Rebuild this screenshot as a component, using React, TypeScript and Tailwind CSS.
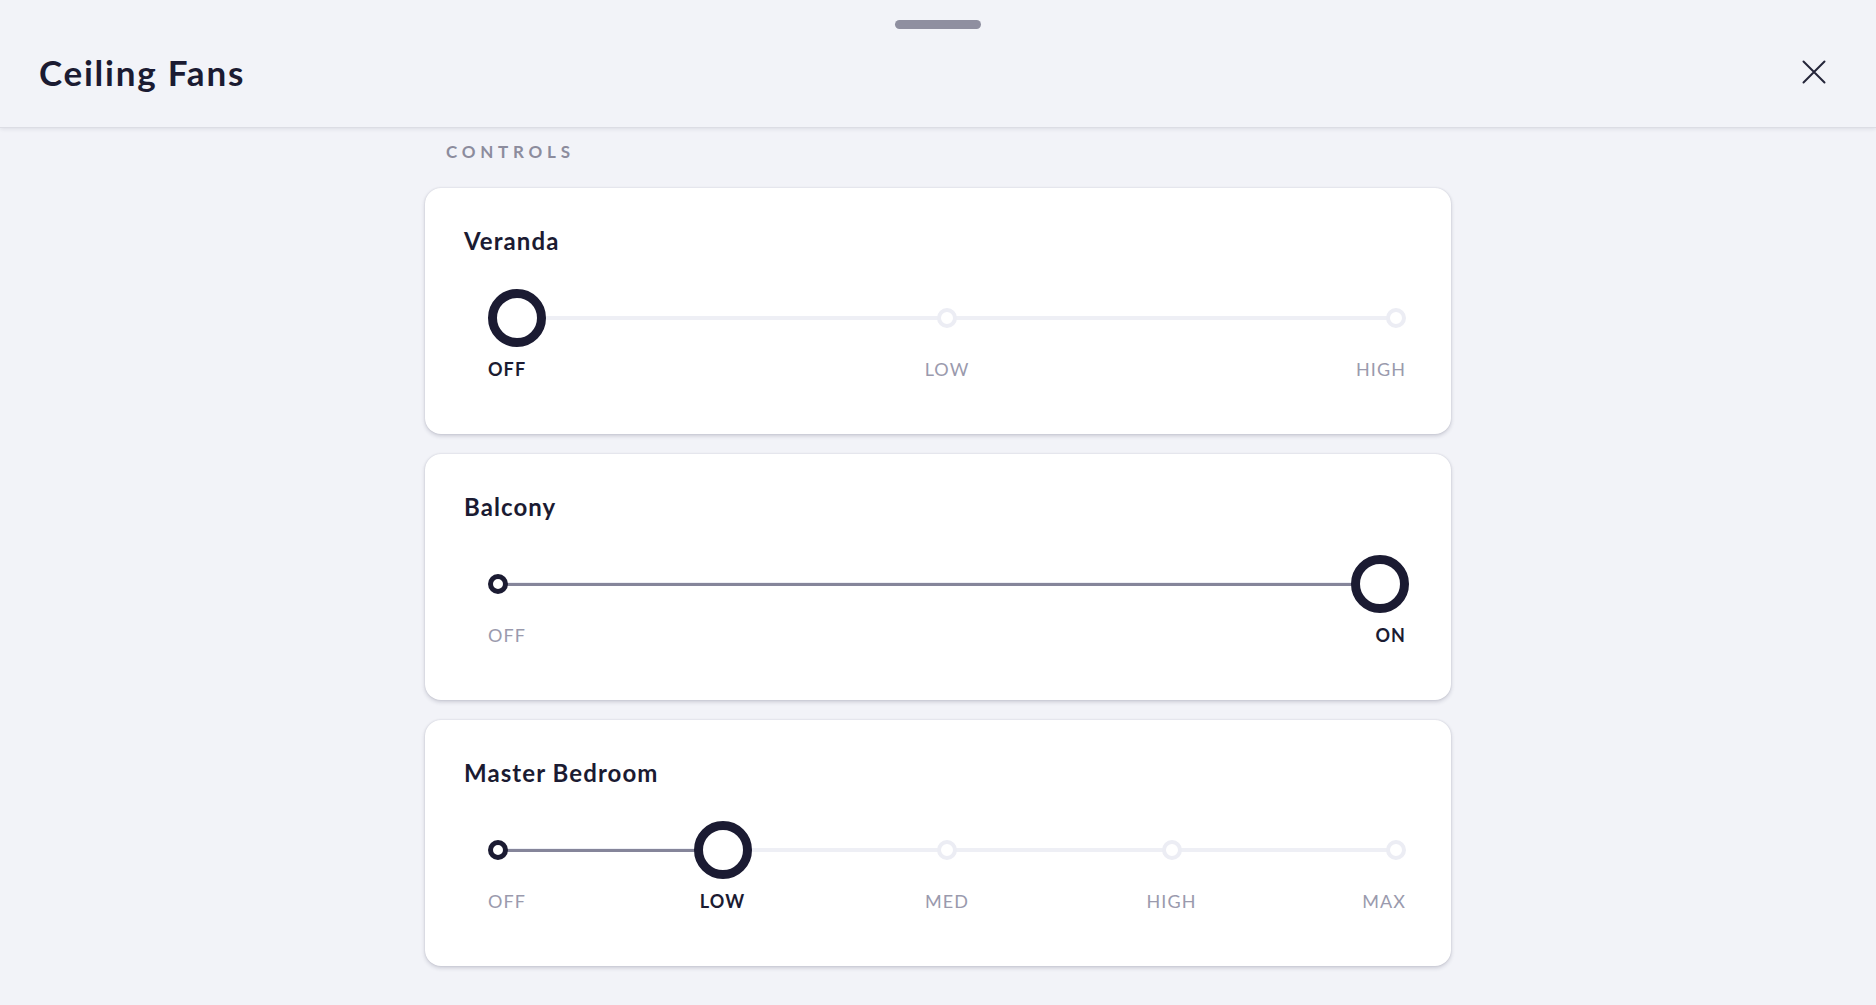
import React from "react";

type Fan = { name: string; stops: string[]; value: number };

const fans: Fan[] = [
  { name: "Veranda", stops: ["OFF", "LOW", "HIGH"], value: 0 },
  { name: "Balcony", stops: ["OFF", "ON"], value: 1 },
  { name: "Master Bedroom", stops: ["OFF", "LOW", "MED", "HIGH", "MAX"], value: 1 },
];

const W = 918;
const DOT_R = 10;
const THUMB = 58;

function StepSlider({ stops, value }: { stops: string[]; value: number }) {
  const n = stops.length;
  const step = (W - 2 * DOT_R) / (n - 1);
  const xs = stops.map((_, i) => DOT_R + i * step);
  const thumbX = Math.min(Math.max(xs[value], THUMB / 2), W - THUMB / 2 + 3);

  return (
    <div className="flex flex-col">
      <div className="relative h-[58px]" style={{ width: W }}>
        <div
          className="absolute top-[27px] h-[4px] rounded-full bg-[#eeeff5]"
          style={{ left: DOT_R, width: W - 2 * DOT_R }}
        />
        {value > 0 && (
          <div
            className="absolute top-[27.5px] h-[3px] bg-[#85859a]"
            style={{ left: DOT_R, width: thumbX - DOT_R }}
          />
        )}
        {xs.map((x, i) =>
          i === value ? null : (
            <div
              key={i}
              className={
                i < value
                  ? "absolute top-[19px] h-[20px] w-[20px] rounded-full border-[5px] border-[#1b1b32] bg-white"
                  : "absolute top-[19px] h-[20px] w-[20px] rounded-full border-[4px] border-[#ecedf4] bg-white"
              }
              style={{ left: x - DOT_R }}
            />
          )
        )}
        <div
          className="absolute top-0 h-[58px] w-[58px] rounded-full border-[9px] border-[#1b1b32] bg-white"
          style={{ left: thumbX - THUMB / 2 }}
        />
      </div>
      <div className="relative mt-[10px] h-[24px]" style={{ width: W }}>
        {stops.map((s, i) => {
          const active = i === value;
          const cls =
            (active
              ? "font-bold text-[#1b1b32] "
              : "font-normal text-[#9a9aad] ") +
            "absolute top-0 whitespace-nowrap text-[18px] leading-[24px] tracking-[0.06em]";
          if (i === 0) return <span key={i} className={cls + " left-0"}>{s}</span>;
          if (i === n - 1) return <span key={i} className={cls + " right-0"}>{s}</span>;
          return (
            <span key={i} className={cls + " -translate-x-1/2"} style={{ left: xs[i] }}>
              {s}
            </span>
          );
        })}
      </div>
    </div>
  );
}

function FanCard({ fan }: { fan: Fan }) {
  return (
    <div className="flex h-[246px] w-[1026px] flex-col rounded-[16px] bg-white pl-[39px] pt-[39px] shadow-[0_2px_4px_rgba(30,30,60,0.18),0_0_2px_rgba(30,30,60,0.14)]">
      <div className="text-[24px] font-bold leading-[28px] tracking-[0.045em] text-[#1b1b32]">{fan.name}</div>
      <div className="ml-[24px] mt-[34px]">
        <StepSlider stops={fan.stops} value={fan.value} />
      </div>
    </div>
  );
}

export default function App() {
  return (
    <div
      className="flex min-h-[1005px] w-full flex-col bg-[#f2f3f8] text-[#1b1b32]"
      style={{ fontFamily: "Lato, 'Open Sans', sans-serif" }}
    >
      <header className="relative flex h-[128px] items-center justify-between border-b border-[#dcdde4] bg-[#f2f3f8] pl-[39px] pr-[50px] pt-[16px] shadow-[0_1px_4px_rgba(30,30,60,0.10)]">
        <div className="absolute left-1/2 top-[20px] h-[9px] w-[86px] -translate-x-1/2 rounded-full bg-[#8f8fa0]" />
        <h1 className="text-[35px] font-bold leading-[40px] tracking-[0.05em] text-[#1b1b32]">
          Ceiling Fans
        </h1>
        <button className="flex h-[24px] w-[24px] items-center justify-center">
          <svg width="24" height="24" viewBox="0 0 24 24" fill="none">
            <path d="M1.5 1.5L22.5 22.5M22.5 1.5L1.5 22.5" stroke="#25253a" strokeWidth="2" strokeLinecap="round" />
          </svg>
        </button>
      </header>
      <main className="mx-auto flex w-[1026px] flex-col">
        <div className="ml-[21px] mt-[14px] text-[17px] font-bold leading-[20px] tracking-[0.28em] text-[#8c8c9d]">
          CONTROLS
        </div>
        <div className="mt-[26px] flex flex-col gap-[20px]">
          {fans.map((f) => (
            <FanCard key={f.name} fan={f} />
          ))}
        </div>
      </main>
    </div>
  );
}
